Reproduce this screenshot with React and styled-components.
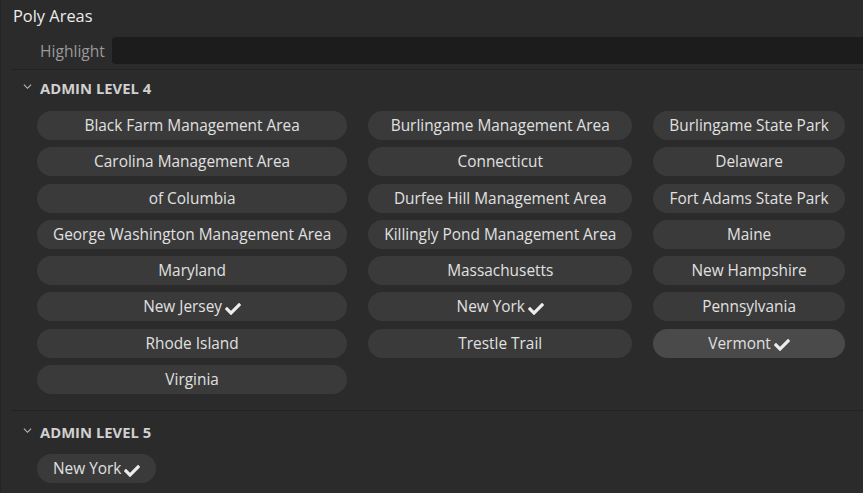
import React from "react";
import styled, { createGlobalStyle } from "styled-components";
import { FaCheck } from "react-icons/fa";

const Global = createGlobalStyle`
  html, body {
    margin: 0;
    padding: 0;
    background: #2b2b2b;
  }
  body {
    font-family: "Open Sans", "Noto Sans", sans-serif;
    color: #dcdcdc;
  }
`;

const Panel = styled.div`
  width: 863px;
  height: 493px;
  overflow: hidden;
  box-sizing: border-box;
  border-left: 1px solid #242424;
  background: #2b2b2b;
`;

const Title = styled.div`
  font-size: 16.4px;
  color: #ececec;
  padding: 4px 0 0 12px;
  height: 32px;
  box-sizing: border-box;
`;

const HighlightRow = styled.div`
  display: flex;
  align-items: center;
  padding-left: 39px;
  gap: 7px;
  height: 27px;
  margin-top: 5px;
`;

const Label = styled.span`
  font-size: 15.6px;
  color: #9a9a9a;
`;

const Input = styled.div`
  flex: 1;
  height: 27px;
  background: #1c1c1c;
  border-radius: 4px 0 0 4px;
`;

const Section = styled.div`
  margin-left: 10px;
  border-top: 1px solid #222222;
  padding: ${(p) => p.$pad}px 0 16px 0;
  margin-top: ${(p) => p.$top}px;
`;

const Header = styled.div`
  display: flex;
  align-items: center;
  gap: 8px;
  padding-left: 12px;
  height: 20px;
  font-size: 14.8px;
  font-weight: 700;
  color: #d0d0d0;
`;

const Chevron = styled.svg`
  width: 9px;
  height: 9px;
  margin-top: -4px;
`;

const Grid = styled.div`
  display: grid;
  grid-template-columns: repeat(3, auto);
  justify-content: start;
  column-gap: 21px;
  row-gap: 7.3px;
  padding-left: 26px;
  margin-top: ${(p) => p.$gap}px;
`;

const Pill = styled.div`
  display: flex;
  align-items: center;
  justify-content: center;
  height: 29px;
  padding: 0 16px;
  border-radius: 15px;
  background: ${(p) => (p.$active ? "#4a4a4a" : "#3a3a3a")};
  font-size: 15.4px;
  color: #e0e0e0;
  white-space: nowrap;
`;

const Check = styled(FaCheck)`
  width: 16px;
  height: 16px;
  margin-left: 3px;
  margin-top: 4px;
  color: #ececec;
`;

const level4 = [
  ["Black Farm Management Area"],
  ["Burlingame Management Area"],
  ["Burlingame State Park"],
  ["Carolina Management Area"],
  ["Connecticut"],
  ["Delaware"],
  ["of Columbia"],
  ["Durfee Hill Management Area"],
  ["Fort Adams State Park"],
  ["George Washington Management Area"],
  ["Killingly Pond Management Area"],
  ["Maine"],
  ["Maryland"],
  ["Massachusetts"],
  ["New Hampshire"],
  ["New Jersey", true],
  ["New York", true],
  ["Pennsylvania"],
  ["Rhode Island"],
  ["Trestle Trail"],
  ["Vermont", true, true],
  ["Virginia"],
];

function Arrow() {
  return (
    <Chevron viewBox="0 0 10 10">
      <path d="M1 3 L5 7 L9 3" fill="none" stroke="#bdbdbd" strokeWidth="1.2" />
    </Chevron>
  );
}

function Area({ name, checked, active }) {
  return (
    <Pill $active={active}>
      {name}
      {checked && <Check />}
    </Pill>
  );
}

export default function App() {
  return (
    <>
      <Global />
      <Panel>
        <Title>Poly Areas</Title>
        <HighlightRow>
          <Label>Highlight</Label>
          <Input />
        </HighlightRow>
        <Section $top={5} $pad={8}>
          <Header>
            <Arrow />
            ADMIN LEVEL 4
          </Header>
          <Grid $gap={13}>
            {level4.map(([n, c, a]) => (
              <Area key={n} name={n} checked={c} active={a} />
            ))}
          </Grid>
        </Section>
        <Section $top={0} $pad={11}>
          <Header>
            <Arrow />
            ADMIN LEVEL 5
          </Header>
          <Grid $gap={12}>
            <Area name="New York" checked />
          </Grid>
        </Section>
      </Panel>
    </>
  );
}
